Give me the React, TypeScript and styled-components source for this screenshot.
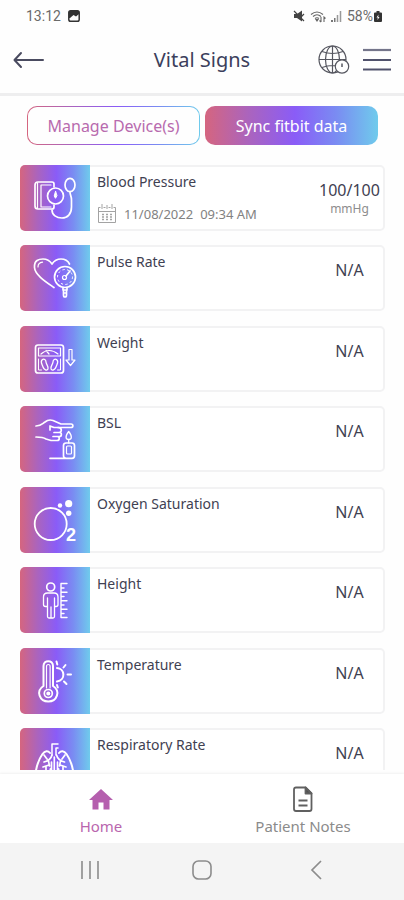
import React from "react";
import styled, { createGlobalStyle } from "styled-components";

const GRADIENT = "linear-gradient(90deg, #d5657f 0%, #ab64bd 25%, #8a5cf7 52%, #7a8cf2 76%, #6fcbec 100%)";

const GlobalStyle = createGlobalStyle`
  *, *::before, *::after { box-sizing: border-box; }
  body { margin: 0; background: #fefefe; }
  button { font: inherit; color: inherit; border: 0; padding: 0; background: none; cursor: pointer; }
`;

const Screen = styled.div`
  display: flex;
  flex-direction: column;
  height: 100vh;
  background: #fefefe;
  color: #3f4152;
  font-family: "Noto Sans", "Open Sans", sans-serif;
  font-size: 14px;
`;

const StatusBar = styled.div`
  display: flex;
  justify-content: space-between;
  align-items: center;
  height: 32px;
  flex: none;
  padding: 0 22px 0 26px;
  color: #6a6a6a;
  font-family: Roboto, sans-serif;
  font-size: 14px;
`;

const StatusGroup = styled.div<{ $gap: number }>`
  display: flex;
  align-items: center;
  gap: ${(p) => p.$gap}px;
`;

const Header = styled.header`
  display: grid;
  grid-template-columns: 80px 1fr 80px;
  align-items: center;
  height: 64px;
  flex: none;
  padding: 0 13px 6px;
  border-bottom: 3px solid #eeeeef;
`;

const Title = styled.h1`
  margin: 0;
  text-align: center;
  font-size: 20px;
  line-height: 24px;
  font-weight: 400;
  color: #3c3f5c;
`;

const HeaderActions = styled.div`
  display: flex;
  justify-content: flex-end;
  gap: 13px;
`;

const IconButton = styled.button`
  display: flex;
  align-items: center;
  width: max-content;
`;

const Actions = styled.div`
  display: flex;
  flex: none;
  gap: 5px;
  padding: 10px 26px 0 27px;
`;

const ActionButton = styled.button<{ $filled?: boolean }>`
  flex: 1;
  height: 39px;
  border: 1px solid transparent;
  border-radius: 10px;
  font-size: 16px;
  white-space: nowrap;
  color: ${(p) => (p.$filled ? "#ffffff" : "#b86bae")};
  background: ${(p) =>
    p.$filled
      ? `${GRADIENT} border-box`
      : `linear-gradient(#fefefe, #fefefe) padding-box, ${GRADIENT} border-box`};
`;

const VitalList = styled.ul`
  flex: 1;
  min-height: 0;
  overflow: hidden;
  margin: 20px 19px 4px 20px;
  padding: 0;
  list-style: none;
`;

const VitalCard = styled.li`
  display: flex;
  height: 66px;
  margin-bottom: 14px;
  border-radius: 5px;
  overflow: hidden;
  background: #ffffff;
  box-shadow: inset 0 0 0 2px #f2f2f3;

  &:nth-child(even) {
    margin-bottom: 15px;
  }
`;

const Tile = styled.div`
  flex: none;
  width: 70px;
  height: 66px;
  background: ${GRADIENT};
`;

const Details = styled.div`
  flex: 1;
  display: flex;
  flex-direction: column;
  gap: 11px;
  padding: 7px 0 0 7px;
`;

const VitalName = styled.span`
  font-size: 14px;
  line-height: 20px;
`;

const Recorded = styled.span`
  display: flex;
  align-items: center;
  gap: 7px;
  color: #828282;
  font-size: 13px;
  line-height: 22px;
  white-space: nowrap;
`;

const Reading = styled.div`
  flex: none;
  width: 71px;
  padding-top: 15px;
  text-align: center;
`;

const Value = styled.div`
  font-size: 16px;
  line-height: 20px;
`;

const Unit = styled.div`
  color: #8d8d8d;
  font-size: 12px;
  line-height: 18px;
`;

const TabBar = styled.nav`
  display: grid;
  grid-template-columns: 1fr 1fr;
  flex: none;
  height: 69px;
  background: #ffffff;
  box-shadow: 0 -1px 2px #f1f1f1;
`;

const TabLink = styled.a<{ $active?: boolean }>`
  display: flex;
  flex-direction: column;
  align-items: center;
  gap: 3px;
  padding-top: 12px;
  color: ${(p) => (p.$active ? "#b966ae" : "#8b8b8b")};
  font-size: 15px;
  line-height: 20px;
  text-decoration: none;
`;

const SystemBar = styled.div`
  display: flex;
  justify-content: space-between;
  align-items: center;
  flex: none;
  height: 57px;
  padding: 0 77px 3px;
  background: #f4f4f4;
`;

const TileSvg = ({ children }: { children: React.ReactNode }) => (
  <svg
    width="70"
    height="66"
    viewBox="0 0 70 66"
    fill="none"
    stroke="#fff"
    strokeWidth="1.7"
    strokeLinecap="round"
    strokeLinejoin="round"
    aria-hidden="true"
  >
    {children}
  </svg>
);

const PressureIcon = () => (
  <TileSvg>
    <path d="M34 22v-3q0-2-2-2H18q-3 0-3 3v21q0 3 3 3h14q2 0 2-2v-2" />
    <path d="M17.5 18v25M21 20v22M21 20h10M21 42h10" strokeWidth="1.2" />
    <circle cx="35.5" cy="31" r="8" />
    <path d="M35.5 26.5l-1.3 4.5 1.3 2.3 1.3-2.3z" fill="#fff" strokeWidth="1" />
    <ellipse cx="50" cy="20" rx="5" ry="6.7" />
    <path d="M50 27c0 3 1.5 4 1.5 8v7c0 7-4 11-9.500 11S32 50 32 45" />
  </TileSvg>
);

const PulseIcon = () => (
  <TileSvg>
    <path d="M34 42.500C26 37 15 30 14.500 22.500 14 15 19 14 23 14c4 0 7 2 9 5 2-3 5-5 9-5 4 0 7 2 8.500 5" />
    <path d="M18 22c0-3 2-4.500 4.500-4.800" strokeWidth="1.200" />
    <circle cx="45" cy="32" r="10.500" />
    <circle cx="45" cy="32" r="7.500" strokeWidth="1" strokeDasharray="1.500 3.200" />
    <circle cx="44.500" cy="32.500" r="2" strokeWidth="1.200" />
    <path d="M46 31l4-5M43 43v2h4v-2M43.500 45v5q0 2 1.500 2t1.500-2v-5M44 48h2" />
  </TileSvg>
);

const WeightIcon = () => (
  <TileSvg>
    <rect x="15.500" y="19" width="28" height="28" rx="2.500" />
    <path d="M18.500 22h22v8h-22zM21 28q8-7 17 0M29 28l-3-3.500" strokeWidth="1.200" />
    <path d="M22 34c2-2 4 0 4 2s3 5 2 7-4 1-5-2-3-5-1-7zM37 34c-2-2-4 0-4 2s-3 5-2 7 4 1 5-2 3-5 1-7z" strokeWidth="1.300" />
    <path d="M18.500 33v11h3M40.500 33v11h-3" strokeWidth="1" />
    <path d="M49 23.500h3V34h3l-4.500 5.500L46 34h3z" strokeWidth="1.200" />
  </TileSvg>
);

const SugarIcon = () => (
  <TileSvg>
    <path d="M16 20c5 0 6-2 9-4 3-2.500 5-2.500 8-1.500l8 3.500h10c2.500 0 2.500 3.500 0 3.500H38" />
    <path d="M16 31c5 0 7 0 10 2l5 1.500h6c3 0 3-4 0-4h-4M37 30.500h2.500c2.500 0 2.500-4 0-4H34M39 26.500c3 0 3.500-5-1-5h-4l-4-1.500v4" />
    <path d="M48.700 25.500c-4 5-3 8 0 8s4-3 0-8zM48.700 34v3" strokeWidth="1.300" />
    <path d="M30 52.300h15" />
    <rect x="43.500" y="37" width="11" height="15.300" rx="2.500" />
    <rect x="46.500" y="40" width="5" height="8" rx="1" strokeWidth="1.200" />
  </TileSvg>
);

const OxygenIcon = () => (
  <TileSvg>
    <circle cx="30.700" cy="37" r="16" strokeWidth="1.800" />
    <g fill="#fff" stroke="none">
      <circle cx="40" cy="18.500" r="2.200" />
      <circle cx="48.700" cy="16.700" r="3.600" />
      <circle cx="48.700" cy="26.300" r="2.700" />
      <text x="46" y="53.500" fontSize="18" fontWeight="700" fontFamily="Liberation Sans, sans-serif">2</text>
    </g>
  </TileSvg>
);

const HeightIcon = () => (
  <TileSvg>
    <circle cx="30.700" cy="20" r="4" />
    <path d="M27.500 39.500v10q0 1.500 1.500 1.500h4q1.500 0 1.500-1.500v-10M27.500 31v8.500h-2q-2 0-2-2V30q0-4 4-4h6.500q4 0 4 4v7.500q0 2-2 2h-1.500V31M31 40v11" strokeWidth="1.300" />
    <path d="M47 16.500h-6v34h6M41 21h3M41 25.300h6M41 29.500h3M41 33.800h6M41 38h3M41 42.300h6M41 46.500h3" strokeWidth="1.400" />
  </TileSvg>
);

const TemperatureIcon = () => (
  <TileSvg>
    <path d="M23.500 38V18c0-6.500 9.500-6.500 9.500 0v20c8 5 4 15.500-4.700 15.500S15.500 43 23.500 38z" strokeWidth="2" />
    <path d="M26.500 40V18.500q0-2 1.800-2t1.800 2V40" strokeWidth="1.200" />
    <circle cx="28.300" cy="45.500" r="4" strokeWidth="1.700" />
    <circle cx="28.300" cy="45.500" r="1.200" fill="#fff" />
    <path d="M37 20c8 .5 9 12 0 13.500" strokeWidth="2" />
    <path d="M36.500 13.500l.8 3M45.500 17l-2 2.500M47.500 26.500h3.500M44 33.500l2.500 2.500M37 37l.8 2.500" strokeWidth="2" />
  </TileSvg>
);

const LungsIcon = () => (
  <TileSvg>
    <path d="M38 16h-6v11M36 20v7M36 20h2" strokeWidth="1.500" />
    <path d="M30 25c-2-2.500-5-2.500-7.500 1C19 31 16.500 37 15.500 46c0 4 4 4 8 2s7-2 7-7M39 25c2-2.500 5-2.500 7.500 1C50 31 52.500 37 53.500 46c0 4-4 4-8 2s-7-2-7-7" strokeWidth="2" />
    <path d="M32 27c-1 4-4 6-8 7M36.500 27c1 4 4 6 8 7M34.300 29v13M28.500 33l1 5M40.500 33l-1 5M23 39l6-2M46 39l-6-2M24 27l3 4M45 27l-3 4M26 42v-4M43 42v-4M31.500 34v8M37.500 34v8" />
  </TileSvg>
);

const CalendarIcon = () => (
  <svg width="20" height="20" viewBox="0 0 20 20" fill="none" stroke="#a3a3a3" aria-hidden="true">
    <path d="M3.500 3.500h-2v15h17v-15h-2M6.500 3.500h2M11.500 3.500h2M1.500 7.500h17" />
    <path d="M5 0v5M10 1v4M15 0v5" />
    <path d="M5 10.500h10M5 13h10M5 15.500h10" strokeWidth="1.300" strokeDasharray="2 2" />
  </svg>
);

const PictureIcon = () => (
  <svg width="12" height="12" viewBox="0 0 12 12" aria-hidden="true">
    <rect x=".8" y=".8" width="10.400" height="10.400" rx="1.800" fill="none" stroke="#333" strokeWidth="1.500" />
    <path d="M1 1h10v3L8 6.500 5.500 5 2 8H1z" fill="#333" />
  </svg>
);

const MuteIcon = () => (
  <svg width="12" height="12" viewBox="0 0 12 12" aria-hidden="true">
    <path d="M1 4h3l5-3.500v11L4 8H1z" fill="#444" />
    <path d="M1 1l10 10M8 7l3-3" stroke="#444" strokeWidth="1.200" />
  </svg>
);

const WifiIcon = () => (
  <svg width="16" height="13" viewBox="0 0 16 13" fill="none" stroke="#666" aria-hidden="true">
    <path d="M1 4.500q6-5 12 0M3 6.500q4-3.500 8 0M5 8.500q2-1.500 4 0" strokeWidth="1.200" />
    <path d="M6 9.500h2l-1 1.500zM11 7v5M9.500 10.500L11 12M14 12V7l1.500 1.500" strokeWidth="1.100" />
  </svg>
);

const SignalIcon = () => (
  <svg width="11" height="12" viewBox="0 0 11 12" aria-hidden="true">
    <path d="M0 10h2v2H0zM3 8h1.500v4H3z" fill="#777" />
    <path d="M6.500 5v7M9.500 1v11" stroke="#999" strokeWidth="1.500" />
  </svg>
);

const BatteryIcon = () => (
  <svg width="8" height="11" viewBox="0 0 8 11" aria-hidden="true">
    <path d="M2.500 0h3v1.500H7q1 0 1 1V10q0 1-1 1H1q-1 0-1-1V2.500q0-1 1-1h1.500z" fill="#333" />
    <path d="M4.500 3.500L2.500 6.500h1.300L3.500 9l2-3H4.200z" fill="#fff" />
  </svg>
);

const BackIcon = () => (
  <svg width="32" height="18" viewBox="0 0 32 18" fill="none" stroke="#4a4b60" strokeWidth="2" strokeLinecap="round" strokeLinejoin="round" aria-hidden="true">
    <path d="M30 9H2M8 2L1.500 9 8 16" />
  </svg>
);

const GlobeIcon = () => (
  <svg width="32" height="30" viewBox="0 0 32 30" fill="none" stroke="#55565f" strokeWidth="1.200" aria-hidden="true">
    <circle cx="14.500" cy="14.500" r="13.500" />
    <ellipse cx="14.500" cy="14.500" rx="7" ry="13.500" />
    <path d="M14.500 1v27M1 14.500h27M4 6.500q10.500 4 21 0M4 22.500q10.500-4 21 0" />
    <circle cx="24" cy="21.500" r="6.700" fill="#fefefe" />
    <path d="M24 18.500v3.500" strokeWidth="1.500" />
  </svg>
);

const MenuIcon = () => (
  <svg width="28" height="24" viewBox="0 0 28 24" stroke="#50526c" strokeWidth="2.200" aria-hidden="true">
    <path d="M0 2h28" stroke="#74758a" />
    <path d="M0 12h28M0 21.500h28" />
  </svg>
);

const HomeIcon = () => (
  <svg width="24" height="27" viewBox="0 0 24 27" fill="#b55fae" aria-hidden="true">
    <path d="M12 3l12 11h-3.500v9.500h-6v-7h-5v7h-6V14H0z" />
  </svg>
);

const NotesIcon = () => (
  <svg width="20" height="27" viewBox="0 0 20 27" fill="none" stroke="#606060" strokeWidth="1.800" strokeLinejoin="round" aria-hidden="true">
    <path d="M3 1.500h9.500l6 6V23q0 2-2 2H3q-2 0-2-2V3.500q0-2 2-2z" />
    <path d="M12.500 1.500v6h6z" fill="#505050" />
    <path d="M5.500 14.500h9M5.500 19.500h9" />
  </svg>
);

const RecentsIcon = () => (
  <svg width="26" height="20" viewBox="0 0 26 20" stroke="#8c8c8c" strokeWidth="1.600" aria-hidden="true">
    <path d="M5 1v18M13 1v18M21 1v18" />
  </svg>
);

const HomeKeyIcon = () => (
  <svg width="20" height="20" viewBox="0 0 20 20" fill="none" stroke="#8c8c8c" strokeWidth="1.600" aria-hidden="true">
    <rect x="1" y="1" width="18" height="18" rx="5.500" />
  </svg>
);

const BackKeyIcon = () => (
  <svg width="26" height="20" viewBox="0 0 26 20" fill="none" stroke="#8c8c8c" strokeWidth="1.700" aria-hidden="true">
    <path d="M20 1l-9 9 9 9" />
  </svg>
);

type Vital = {
  name: string;
  icon: React.ReactNode;
  value?: string;
  unit?: string;
  date?: string;
  time?: string;
};

const vitals: Vital[] = [
  { name: "Blood Pressure", icon: <PressureIcon />, value: "100/100", unit: "mmHg", date: "11/08/2022", time: "09:34 AM" },
  { name: "Pulse Rate", icon: <PulseIcon /> },
  { name: "Weight", icon: <WeightIcon /> },
  { name: "BSL", icon: <SugarIcon /> },
  { name: "Oxygen Saturation", icon: <OxygenIcon /> },
  { name: "Height", icon: <HeightIcon /> },
  { name: "Temperature", icon: <TemperatureIcon /> },
  { name: "Respiratory Rate", icon: <LungsIcon /> },
];

export default function App() {
  return (
    <Screen>
      <GlobalStyle />
      <StatusBar>
        <StatusGroup $gap={7}>
          <span>13:12</span>
          <PictureIcon />
        </StatusGroup>
        <StatusGroup $gap={5}>
          <MuteIcon />
          <WifiIcon />
          <SignalIcon />
          <StatusGroup $gap={1}>
            <span>58%</span>
            <BatteryIcon />
          </StatusGroup>
        </StatusGroup>
      </StatusBar>
      <Header>
        <IconButton aria-label="Back">
          <BackIcon />
        </IconButton>
        <Title>Vital Signs</Title>
        <HeaderActions>
          <IconButton aria-label="Language and time zone">
            <GlobeIcon />
          </IconButton>
          <IconButton aria-label="Menu">
            <MenuIcon />
          </IconButton>
        </HeaderActions>
      </Header>
      <Actions>
        <ActionButton>Manage Device(s)</ActionButton>
        <ActionButton $filled>Sync fitbit data</ActionButton>
      </Actions>
      <VitalList>
        {vitals.map((vital) => (
          <VitalCard key={vital.name}>
            <Tile>{vital.icon}</Tile>
            <Details>
              <VitalName>{vital.name}</VitalName>
              {vital.date && (
                <Recorded>
                  <CalendarIcon />
                  <span>{vital.date}</span>
                  <span>{vital.time}</span>
                </Recorded>
              )}
            </Details>
            <Reading>
              <Value>{vital.value ?? "N/A"}</Value>
              {vital.unit && <Unit>{vital.unit}</Unit>}
            </Reading>
          </VitalCard>
        ))}
      </VitalList>
      <TabBar>
        <TabLink href="#home" $active aria-current="page">
          <HomeIcon />
          Home
        </TabLink>
        <TabLink href="#notes">
          <NotesIcon />
          Patient Notes
        </TabLink>
      </TabBar>
      <SystemBar>
        <IconButton aria-label="Recent apps">
          <RecentsIcon />
        </IconButton>
        <IconButton aria-label="Home screen">
          <HomeKeyIcon />
        </IconButton>
        <IconButton aria-label="Go back">
          <BackKeyIcon />
        </IconButton>
      </SystemBar>
    </Screen>
  );
}
